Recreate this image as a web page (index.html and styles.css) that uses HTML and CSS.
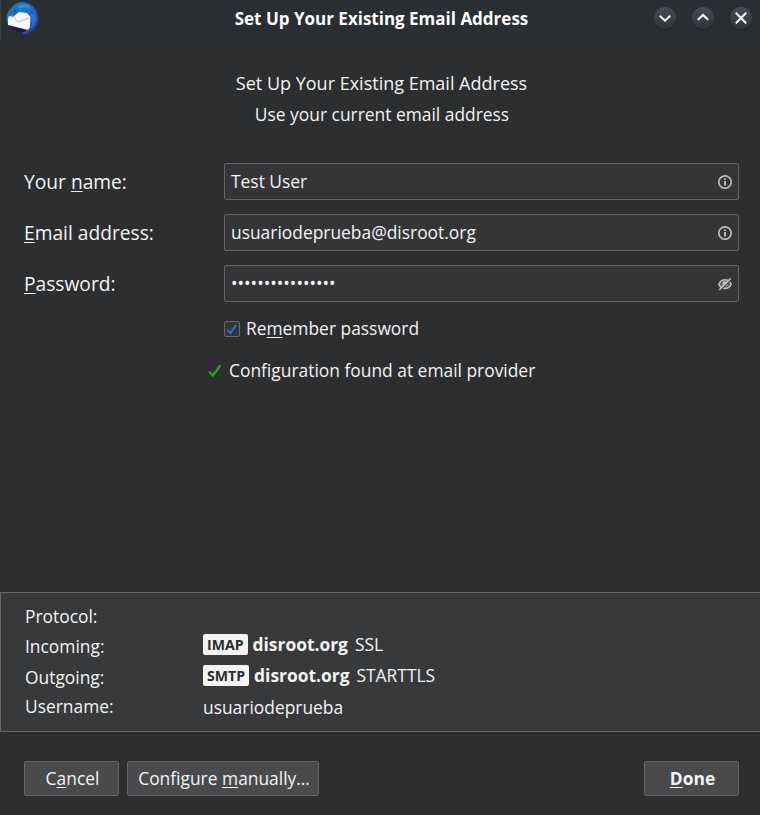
FILE: index.html
```html
<!DOCTYPE html>
<html lang="en">
<head>
<meta charset="utf-8">
<title>Set Up Your Existing Email Address</title>
<link rel="stylesheet" href="styles.css">
</head>
<body>
<div class="window">
  <header class="titlebar">
    <svg class="logo" viewBox="0 0 32 32">
      <defs>
        <linearGradient id="bird" x1="0" y1="0" x2="1" y2="1">
          <stop offset="0" stop-color="#1d5fae"/><stop offset=".35" stop-color="#2277cb"/>
          <stop offset=".7" stop-color="#2458b4"/><stop offset="1" stop-color="#3a2c8e"/>
        </linearGradient>
      </defs>
      <path d="M6 5C9 1 13 0 17 0c9 1 15 8 15 16 0 9-6 15-13 16l-3-.5 2-3L2 23C-.5 17 0 10 6 5z" fill="url(#bird)"/>
      <path d="M2 22c2 4 4 6 8 7l8 1 4-3-18-6z" fill="#231747"/>
      <path d="M12 4c4-3 10-2 14 3-4-2-9-2-13 0z" fill="#2b93dc"/>
      <path d="M24 12c3 5 3 10 0 15 5-4 7-10 5-15z" fill="#2c74c8"/>
      <path d="M3 14l4 1 6-5 8 1 3.500 4-.500 10-2 3-6-1.500L2 23V17z" fill="#f7f7f9"/>
      <path d="M6.500 13.500l5 6.500L23 16" fill="none" stroke="#b4b6bd" stroke-width=".9"/>
      <path d="M6 5c-1 4 0 6 2 9 2-3 3-4 6-5L10 5z" fill="#216bba"/>
      <circle cx="9" cy="9" r=".8" fill="#102b60"/>
    </svg>
    <div class="caption">Set Up Your Existing Email Address</div>
    <div class="controls">
      <span class="control"><svg viewBox="0 0 22 22"><path d="M5.800 8.800l5.200 4.900 5.200-4.900"/></svg></span>
      <span class="control"><svg viewBox="0 0 22 22"><path d="M5.800 12.800L11 7.900l5.200 4.900"/></svg></span>
      <span class="control"><svg viewBox="0 0 22 22"><path d="M5.800 5.800l10.400 10.400M16.200 5.800L5.800 16.200"/></svg></span>
    </div>
  </header>
  <main class="content">
    <div class="heading">Set Up Your Existing Email Address</div>
    <div class="subheading">Use your current email address</div>
    <div class="form">
      <div class="row">
        <div class="label">Your <u>n</u>ame:</div>
        <div class="field"><span>Test User</span>
          <svg class="icon" viewBox="0 0 14 14"><circle cx="7" cy="7" r="6.200" fill="none" stroke="#b9b9ba" stroke-width="1.700"/><path d="M6 3.400h2v1.700H6zM6 6h2v4.600H6z" fill="#b9b9ba"/></svg>
        </div>
      </div>
      <div class="row">
        <div class="label"><u>E</u>mail address:</div>
        <div class="field"><span>usuariodeprueba@disroot.org</span>
          <svg class="icon" viewBox="0 0 14 14"><circle cx="7" cy="7" r="6.200" fill="none" stroke="#b9b9ba" stroke-width="1.700"/><path d="M6 3.400h2v1.700H6zM6 6h2v4.600H6z" fill="#b9b9ba"/></svg>
        </div>
      </div>
      <div class="row">
        <div class="label"><u>P</u>assword:</div>
        <div class="field"><span>••••••••••••••••</span>
          <svg class="icon" viewBox="0 0 14 14"><path d="M.8 7.400C2 4.500 4.400 2.800 7 2.800s5 1.700 6.200 4.400C12 9.900 9.600 11.400 7 11.400S2 9.900.8 7.400z" fill="#5c5d5f" stroke="#b9b9ba" stroke-width="1.600"/><circle cx="7" cy="6.800" r="2.600" fill="#c2c2c3"/><path d="M2.600 13.100L13.300 2.400" stroke="#353537" stroke-width="1.300"/><path d="M1.200 12.900L12.700 1.400" stroke="#b9b9ba" stroke-width="1.500"/></svg>
        </div>
      </div>
    </div>
    <div class="remember">
      <span class="checkbox"><svg viewBox="0 0 14 14"><path d="M2.500 8l3 3.200L11 3" fill="none" stroke="#0a84ff" stroke-width="1.700"/></svg></span>
      <span>Re<u>m</u>ember password</span>
    </div>
    <div class="status">
      <svg class="tick" viewBox="0 0 14 14"><path d="M1.200 8.700l3.600 4L12.400 2.400" fill="none" stroke="#12bc00" stroke-width="2"/></svg>
      <span>Configuration found at email provider</span>
    </div>
  </main>
  <section class="panel">
    <div class="names">
      <div>Protocol:</div><div>Incoming:</div><div class="outgoing">Outgoing:</div><div>Username:</div>
    </div>
    <div class="values">
      <div class="server"><span class="badge">IMAP</span><b>disroot.org</b><span>SSL</span></div>
      <div class="server"><span class="badge">SMTP</span><b>disroot.org</b><span>STARTTLS</span></div>
      <div class="user">usuariodeprueba</div>
    </div>
  </section>
  <footer class="actions">
    <div class="button cancel"><span>C<u>a</u>ncel</span></div>
    <div class="button configure"><span>Configure <u>m</u>anually…</span></div>
    <div class="button done"><span><u>D</u>one</span></div>
  </footer>
</div>
</body>
</html>
```
FILE: styles.css
```css
* { box-sizing: border-box; }
body {
  margin: 0;
  background: #2d2e30;
  color: #f3f3f4;
  font: 17.4px/30px "Open Sans", sans-serif;
}
u { text-decoration-thickness: 1px; text-underline-offset: 2px; text-decoration-skip-ink: none; }
.window { width: 760px; height: 815px; display: flex; flex-direction: column; overflow: hidden; }
.titlebar {
  height: 40px;
  flex: none;
  display: grid;
  grid-template-columns: 120px 1fr 120px;
  background: linear-gradient(#2b2f34, #2a2d31);
  border-left: 1px solid #3b4248;
}
.logo { width: 32px; height: 32px; margin: 2px 0 0 5px; }
.caption {
  color: #fcfcfc;
  font-size: 17px;
  font-weight: 700;
  line-height: 37px;
  text-align: center;
  padding-left: 2px;
  white-space: nowrap;
}
.controls { display: flex; justify-content: flex-end; gap: 16px; padding: 7px 8px 0 0; }
.control {
  width: 22px;
  height: 22px;
  border-radius: 50%;
  background: linear-gradient(#454c53, #30353a);
  box-shadow: 0 1px 1px #1d2023;
}
.control svg { display: block; width: 22px; height: 22px; fill: none; stroke: #fcfcfc; stroke-width: 2; }
.content { height: 552px; flex: none; padding: 28px 21px 0 24px; }
.heading { font-size: 18px; text-align: center; }
.subheading { text-align: center; padding: 1px 0 0 1px; }
.form { display: grid; gap: 14px; margin-top: 34px; }
.row { display: grid; grid-template-columns: 200px 1fr; height: 37px; }
.label { font-size: 19.2px; line-height: 37px; }
.field {
  display: flex;
  align-items: center;
  justify-content: space-between;
  padding: 0 6px;
  background: #353537;
  border: 1px solid #656567;
  border-radius: 2px;
}
.field span { padding-bottom: 1px; }
.icon { width: 14px; height: 14px; }
.remember { display: flex; align-items: center; gap: 6px; margin: 12px 0 0 200px; }
.remember > :last-child { margin: -1px 0 1px; }
.checkbox { width: 16px; height: 16px; border: 1px solid #68696b; border-radius: 2px; background: #353537; }
.checkbox svg { display: block; width: 14px; height: 14px; }
.status { display: flex; align-items: center; gap: 7px; margin: 11px 0 0 184px; }
.tick { width: 14px; height: 14px; }
.panel {
  height: 140px;
  flex: none;
  display: grid;
  grid-template-columns: 178px 1fr;
  padding-left: 24px;
  background: #38393b;
  border: solid #69696b;
  border-width: 1px 0 1px 1px;
}
.names { padding-top: 8px; }
.outgoing { padding-top: 1px; margin-bottom: -1px; }
.values { padding-top: 36px; }
.server { display: flex; align-items: center; height: 31px; }
.server > :not(.badge) { padding-bottom: 1px; }
.badge {
  height: 21px;
  padding: 0 4px;
  border-radius: 2px;
  background: #f3f3f4;
  color: #2a2c2f;
  font-size: 14.1px;
  font-weight: 700;
  line-height: 21px;
  margin-right: 5px;
}
.server b { margin-right: 7px; }
.user { padding-top: 1px; }
.actions { display: flex; gap: 8px; padding: 29px 21px 0 24px; }
.button {
  height: 35px;
  width: 95px;
  border: 1px solid #646466;
  border-radius: 2px;
  background: #4a4a4c;
  line-height: 33px;
  text-align: center;
  white-space: nowrap;
  padding-left: 2px;
}
.configure { width: 192px; }
.done { margin-left: auto; font-weight: 700; }
```
